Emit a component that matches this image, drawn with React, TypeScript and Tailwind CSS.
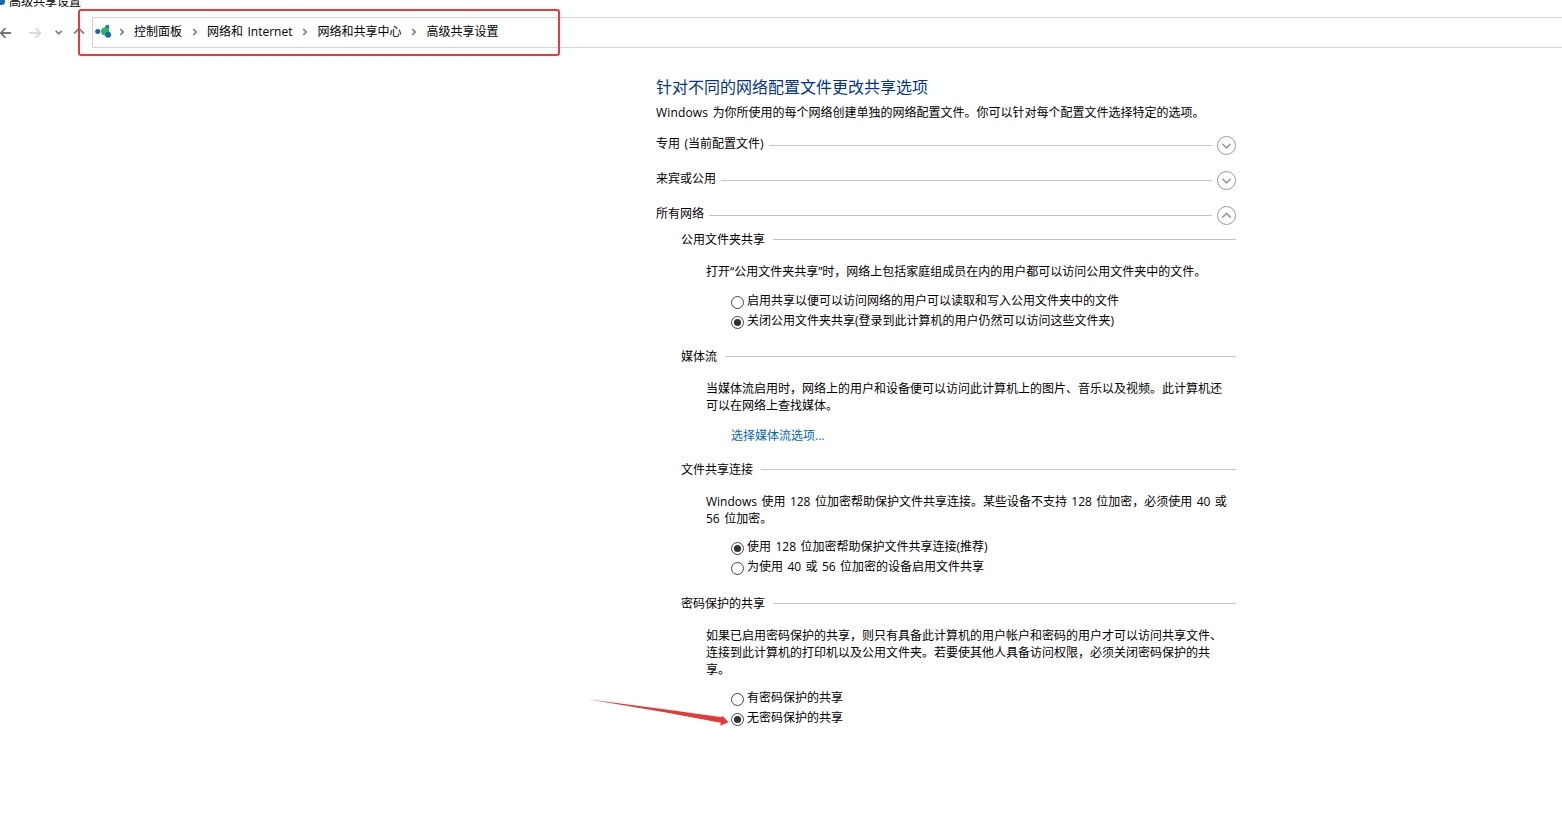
import React from 'react';
import clsx from 'clsx';

const BREADCRUMBS = ['控制面板', '网络和 Internet', '网络和共享中心', '高级共享设置'];

const NetworkIcon: React.FC<{ className?: string }> = ({ className }) => (
  <svg className={className} width="18" height="16" viewBox="0 0 18 16">
    <path d="M3 7.5 L11 3 L12.5 10.5 Z" fill="#c4e3cd" />
    <circle cx="12.3" cy="2.9" r="2.1" fill="#1c74b8" />
    <circle cx="10.2" cy="7.4" r="4.2" fill="#2fb457" />
    <circle cx="2.7" cy="7.4" r="2.5" fill="#1668ad" />
    <circle cx="13.1" cy="10.8" r="3" fill="#1668b4" />
  </svg>
);

const CrumbArrow = () => (
  <svg className="shrink-0" width="6" height="8" viewBox="0 0 6 8" fill="none">
    <path d="M1.2 1 L4.2 4 L1.2 7" stroke="#777777" strokeWidth="1.6" />
  </svg>
);

const NavButtons = () => (
  <div className="flex items-center w-[92px] h-full shrink-0">
    <svg width="92" height="31" viewBox="0 0 92 31" fill="none">
      <path d="M11 16 H1 M5.5 11.2 L0.7 16 L5.5 20.8" stroke="#757575" strokeWidth="1.8" />
      <path d="M29 16 H40 M35.5 11.2 L40.3 16 L35.5 20.8" stroke="#d2d2d2" strokeWidth="1.6" />
      <path d="M55.7 13.8 L58.7 16.8 L61.7 13.8" stroke="#808080" strokeWidth="1.8" />
      <path d="M74 16.6 L79 11.6 L84 16.6" stroke="#808080" strokeWidth="1.8" />
    </svg>
  </div>
);

const AddressBar = () => (
  <div className="flex h-[31px]">
    <NavButtons />
    <div className="flex flex-1 items-center border-y border-l border-[#d4d4d4] pl-[2px]">
      <NetworkIcon className="shrink-0 -mt-[2px]" />
      <div className="flex items-center ml-[6px]">
        {BREADCRUMBS.map((crumb, i) => (
          <React.Fragment key={crumb}>
            <span className={clsx('flex -mt-[2px]', i > 0 && 'ml-[10px]')}>
              <CrumbArrow />
            </span>
            <span className="ml-[9px] leading-[17px] -mt-[3px] whitespace-pre">{crumb}</span>
          </React.Fragment>
        ))}
      </div>
    </div>
  </div>
);

interface GroupRowProps {
  title: string;
  expanded?: boolean;
}

const GroupRow: React.FC<GroupRowProps> = ({ title, expanded }) => (
  <div className="flex items-center h-5">
    <span className="leading-[17px] -mt-[3px]">{title}</span>
    <div className="flex-1 h-px bg-[#c3c3c3] ml-[5px] mr-[5px]" />
    <svg width="19" height="19" viewBox="0 0 19 19" fill="none" stroke="#9a9a9a">
      <circle cx="9.5" cy="9.5" r="9" />
      <path d={expanded ? 'M5.3 11.6 L9.5 7.4 L13.7 11.6' : 'M5.3 7.7 L9.5 11.9 L13.7 7.7'} strokeWidth="1.5" />
    </svg>
  </div>
);

const SectionTitle: React.FC<{ title: string }> = ({ title }) => (
  <div className="flex items-center h-[17px] leading-[17px]">
    <span>{title}</span>
    <div className="flex-1 h-px bg-[#c3c3c3] ml-2" />
  </div>
);

interface RadioProps {
  label: string;
  checked?: boolean;
}

const Radio: React.FC<RadioProps> = ({ label, checked }) => (
  <div className="flex items-center h-5">
    <svg className="shrink-0 mt-[3px]" width="13" height="13" viewBox="0 0 13 13">
      <circle cx="6.5" cy="6.5" r="6" fill="#fff" stroke="#444444" />
      {checked && <circle cx="6.5" cy="6.5" r="3.6" fill="#333333" />}
    </svg>
    <span className="ml-[3px] -mt-[2px] leading-[17px] whitespace-nowrap">{label}</span>
  </div>
);

// Text block, one entry per line
const Lines: React.FC<{ lines: string[] }> = ({ lines }) => (
  <div className="mt-[15px] pl-[25px] leading-[17px]">
    {lines.map((line) => (
      <p key={line} className="whitespace-nowrap">{line}</p>
    ))}
  </div>
);

export default function App() {
  return (
    <div className="relative w-[1562px] h-[814px] overflow-hidden bg-white text-black text-[12px] [word-spacing:1.3px] font-['Open_Sans','Noto_Sans_CJK_SC',sans-serif]">
      {/* Title bar */}
      <div className="flex items-end h-[17px] pb-[7px]">
        <div className="flex items-center h-[17px]">
          <div className="w-[5px] h-[7px] rounded-r-full bg-[#1668ad]" />
          <span className="ml-1 leading-[17px]">高级共享设置</span>
        </div>
      </div>
      <AddressBar />

      <main className="ml-[656px] w-[580px] pt-[27px]">
        <h1 className="text-[16px] leading-6 text-[#003399]">针对不同的网络配置文件更改共享选项</h1>
        <p className="mt-[5px] leading-[17px] whitespace-nowrap">
          <span className="tracking-[0.15px]">Windows</span> 为你所使用的每个网络创建单独的网络配置文件。你可以针对每个配置文件选择特定的选项。
        </p>

        <div className="flex flex-col gap-[15px] mt-[14px]">
          <GroupRow title="专用 (当前配置文件)" />
          <GroupRow title="来宾或公用" />
          <GroupRow title="所有网络" expanded />
        </div>

        <div className="pl-[25px] pt-[6px]">
          <section>
            <SectionTitle title="公用文件夹共享" />
            <Lines lines={['打开“公用文件夹共享”时，网络上包括家庭组成员在内的用户都可以访问公用文件夹中的文件。']} />
            <div className="mt-[11px] pl-[50px]">
              <Radio label="启用共享以便可以访问网络的用户可以读取和写入公用文件夹中的文件" />
              <Radio label="关闭公用文件夹共享(登录到此计算机的用户仍然可以访问这些文件夹)" checked />
            </div>
          </section>

          <section className="mt-[17px]">
            <SectionTitle title="媒体流" />
            <Lines
              lines={[
                '当媒体流启用时，网络上的用户和设备便可以访问此计算机上的图片、音乐以及视频。此计算机还',
                '可以在网络上查找媒体。',
              ]}
            />
            <a className="block mt-[13px] pl-[50px] leading-[17px] text-[#0066cc]">选择媒体流选项...</a>
          </section>

          <section className="mt-[17px]">
            <SectionTitle title="文件共享连接" />
            <Lines
              lines={[
                'Windows 使用 128 位加密帮助保护文件共享连接。某些设备不支持 128 位加密，必须使用 40 或',
                '56 位加密。',
              ]}
            />
            <div className="mt-[10px] pl-[50px]">
              <Radio label="使用 128 位加密帮助保护文件共享连接(推荐)" checked />
              <Radio label="为使用 40 或 56 位加密的设备启用文件共享" />
            </div>
          </section>

          <section className="mt-[18px]">
            <SectionTitle title="密码保护的共享" />
            <Lines
              lines={[
                '如果已启用密码保护的共享，则只有具备此计算机的用户帐户和密码的用户才可以访问共享文件、',
                '连接到此计算机的打印机以及公用文件夹。若要使其他人具备访问权限，必须关闭密码保护的共',
                '享。',
              ]}
            />
            <div className="mt-[10px] pl-[50px]">
              <Radio label="有密码保护的共享" />
              <Radio label="无密码保护的共享" checked />
            </div>
          </section>
        </div>
      </main>

      {/* Red annotations */}
      <div className="absolute left-[78px] top-[9px] w-[482px] h-[47px] border-2 border-[#e53b40] rounded-[3px]" />
      <svg className="absolute left-[586px] top-[696px]" width="146" height="32" viewBox="0 0 146 32">
        <path d="M2 3.3 L80 13.4 L136 21.2 L136.3 19.8 L142.5 26.3 L134.3 29.8 L134.8 26.8 L80 16.6 Z" fill="#e53935" />
      </svg>
    </div>
  );
}
